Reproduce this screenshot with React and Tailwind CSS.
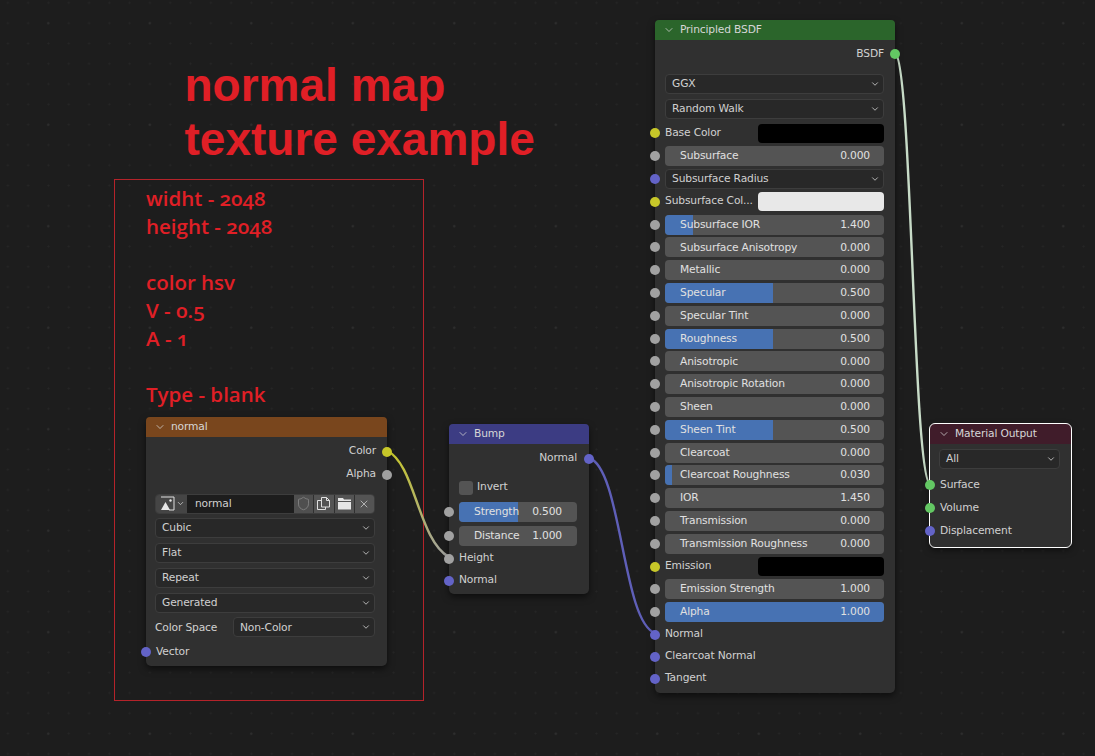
import { ChevronDown, Shield, X } from 'lucide-react'

const YELLOW = 'bg-[#c7c729]'
const GRAY = 'bg-[#a1a1a1]'
const PURPLE = 'bg-[#6363c7]'
const GREEN = 'bg-[#63c763]'

const Socket = ({ color, side = 'left' }) => (
  <span
    className={`absolute top-1/2 h-[10px] w-[10px] -translate-y-1/2 rounded-full ${color} ${
      side === 'left' ? 'left-[-5px]' : 'right-[-5px]'
    }`}
  />
)

const Header = ({ title, bg }) => (
  <div className={`flex h-5 items-center rounded-t-[4px] pl-[8px] text-[#d6d6d6] ${bg}`}>
    <ChevronDown className="mr-[5px] h-3 w-3" strokeWidth={1.5} />
    <span className="pt-px">{title}</span>
  </div>
)

const Dropdown = ({ label, className = '' }) => (
  <div className={`flex h-5 flex-1 items-center justify-between rounded-[4px] border border-[#3d3d3d] bg-[#282828] pl-[6px] pr-[3px] text-[#d0d0d0] ${className}`}>
    <span className="pt-px">{label}</span>
    <ChevronDown className="h-[10px] w-[10px]" strokeWidth={2} />
  </div>
)

// value slider with the blue fill taken from data
const Slider = ({ label, value, fill = 0, pr = 'pr-[14px]' }) => (
  <div className={`relative flex h-5 flex-1 items-center justify-between overflow-hidden rounded-[4px] bg-[#545454] pl-[15px] ${pr} text-[#e0e0e0]`}>
    <span className="absolute inset-y-0 left-0 bg-[#4772b3]" style={{ width: `${fill}%` }} />
    <span className="relative whitespace-nowrap pt-px">{label}</span>
    <span className="relative pt-px">{value}</span>
  </div>
)

const Row = ({ children, left, right, className = 'h-[22.8px]' }) => (
  <div className={`relative flex items-center ${className}`}>
    {left && <Socket color={left} />}
    {right && <Socket color={right} side="right" />}
    {children}
  </div>
)

const principledRows = [
  { type: 'color', label: 'Base Color', socket: YELLOW, swatch: 'bg-black' },
  { type: 'slider', label: 'Subsurface', value: '0.000', socket: GRAY },
  { type: 'select', label: 'Subsurface Radius', socket: PURPLE },
  { type: 'color', label: 'Subsurface Col...', socket: YELLOW, swatch: 'bg-[#e8e8e8]' },
  { type: 'slider', label: 'Subsurface IOR', value: '1.400', socket: GRAY, fill: 13 },
  { type: 'slider', label: 'Subsurface Anisotropy', value: '0.000', socket: GRAY },
  { type: 'slider', label: 'Metallic', value: '0.000', socket: GRAY },
  { type: 'slider', label: 'Specular', value: '0.500', socket: GRAY, fill: 49.5 },
  { type: 'slider', label: 'Specular Tint', value: '0.000', socket: GRAY },
  { type: 'slider', label: 'Roughness', value: '0.500', socket: GRAY, fill: 49.5 },
  { type: 'slider', label: 'Anisotropic', value: '0.000', socket: GRAY },
  { type: 'slider', label: 'Anisotropic Rotation', value: '0.000', socket: GRAY },
  { type: 'slider', label: 'Sheen', value: '0.000', socket: GRAY },
  { type: 'slider', label: 'Sheen Tint', value: '0.500', socket: GRAY, fill: 49.5 },
  { type: 'slider', label: 'Clearcoat', value: '0.000', socket: GRAY },
  { type: 'slider', label: 'Clearcoat Roughness', value: '0.030', socket: GRAY, fill: 3 },
  { type: 'slider', label: 'IOR', value: '1.450', socket: GRAY },
  { type: 'slider', label: 'Transmission', value: '0.000', socket: GRAY },
  { type: 'slider', label: 'Transmission Roughness', value: '0.000', socket: GRAY },
  { type: 'color', label: 'Emission', socket: YELLOW, swatch: 'bg-black' },
  { type: 'slider', label: 'Emission Strength', value: '1.000', socket: GRAY },
  { type: 'slider', label: 'Alpha', value: '1.000', socket: GRAY, fill: 100 },
  { type: 'plain', label: 'Normal', socket: PURPLE },
  { type: 'plain', label: 'Clearcoat Normal', socket: PURPLE },
  { type: 'plain', label: 'Tangent', socket: PURPLE },
]

const ImageIcon = () => (
  <svg width="15" height="15" viewBox="0 0 15 15" fill="none">
    <path d="M1 1h13v13H9" stroke="#e0e0e0" strokeWidth="1" />
    <path d="M1 14 L5.5 6 L10 14 Z" fill="#e6e6e6" />
    <circle cx="10.5" cy="4.5" r="1.2" fill="#e6e6e6" />
  </svg>
)

const DuplicateIcon = () => (
  <svg width="15" height="15" viewBox="0 0 15 15" fill="none" stroke="#e0e0e0" strokeWidth="1">
    <path d="M5.5 1.5h5l3 3v6.5h-8z" />
    <path d="M10.5 1.5v3h3" />
    <path d="M5.5 4.5h-4v9h8v-2.5" />
  </svg>
)

const FolderIcon = () => (
  <svg width="15" height="15" viewBox="0 0 15 15" fill="#e6e6e6">
    <path d="M1 2h5l1 1.5h7V5H1z" />
    <path d="M1 6h13v7.5H1z" />
  </svg>
)

const ImagePicker = () => (
  <div className="flex h-5 items-stretch overflow-hidden rounded-[4px] border border-[#3d3d3d] text-[#d0d0d0]">
    <div className="flex w-[31px] items-center bg-[#454545] pl-[4px]">
      <ImageIcon />
      <ChevronDown className="ml-[1px] h-[9px] w-[9px]" strokeWidth={2} />
    </div>
    <div className="flex w-[107px] items-center bg-[#1d1d1d] pl-2 pt-px">normal</div>
    <div className="flex flex-1 items-center justify-center bg-[#4f4f4f] text-[#999999]">
      <Shield className="h-[15px] w-[15px]" strokeWidth={1} />
    </div>
    <div className="ml-px flex flex-1 items-center justify-center bg-[#545454]">
      <DuplicateIcon />
    </div>
    <div className="ml-px flex flex-1 items-center justify-center bg-[#545454]">
      <FolderIcon />
    </div>
    <div className="ml-px flex flex-1 items-center justify-center bg-[#545454]">
      <X className="h-[12px] w-[12px]" strokeWidth={1.5} />
    </div>
  </div>
)

const nodeClass = 'absolute rounded-[5px] bg-[#303030] text-[10.7px] leading-none tracking-[-0.15px] shadow-[0_3px_7px_rgba(0,0,0,0.55)]'

const NormalNode = () => (
  <div className={`${nodeClass} left-[146px] top-[417px] h-[249px] w-[241px]`}>
    <Header title="normal" bg="bg-[#79461d]" />
    <div className="flex flex-col text-[#d0d0d0]">
      <Row right={YELLOW} className="mt-[3px] h-[23px] justify-end pr-[11px]">Color</Row>
      <Row right={GRAY} className="h-[23px] justify-end pr-[11px]">Alpha</Row>
      <div className="mt-[7.5px] flex flex-col gap-[4.8px] pl-[9px] pr-[12px]">
        <ImagePicker />
        <Dropdown label="Cubic" className="flex-none" />
        <Dropdown label="Flat" className="flex-none" />
        <Dropdown label="Repeat" className="flex-none" />
        <Dropdown label="Generated" className="flex-none" />
        <div className="flex items-center">
          <span className="w-[78px] pt-px">Color Space</span>
          <Dropdown label="Non-Color" />
        </div>
      </div>
      <Row left={PURPLE} className="mt-[3.5px] h-[23px] pl-[10px]">Vector</Row>
    </div>
  </div>
)

const BumpNode = () => (
  <div className={`${nodeClass} left-[449px] top-[424px] h-[170px] w-[140px]`}>
    <Header title="Bump" bg="bg-[#3c3c83]" />
    <div className="flex flex-col text-[#d0d0d0]">
      <Row right={PURPLE} className="mt-[3px] h-[23px] justify-end pr-[12px]">Normal</Row>
      <div className="mt-[6px] flex h-[23px] items-center pl-[10px]">
        <span className="mr-1 h-[14px] w-[14px] rounded-[3px] bg-[#545454]" />
        Invert
      </div>
      <Row left={GRAY} className="mt-[1px] h-[24px] pl-[10px] pr-[12px]">
        <Slider label="Strength" value="0.500" fill={50} pr="pr-[15px]" />
      </Row>
      <Row left={GRAY} className="h-[24px] pl-[10px] pr-[12px]">
        <Slider label="Distance" value="1.000" pr="pr-[15px]" />
      </Row>
      <Row left={GRAY} className="h-[21px] pl-[10px]">Height</Row>
      <Row left={PURPLE} className="h-[23px] pl-[10px]">Normal</Row>
    </div>
  </div>
)

const PrincipledNode = () => (
  <div className={`${nodeClass} left-[655px] top-[20px] h-[673px] w-[240px]`}>
    <Header title="Principled BSDF" bg="bg-[#2b652b]" />
    <div className="flex flex-col text-[#d0d0d0]">
      <Row right={GREEN} className="mt-[2.5px] h-[23px] justify-end pr-[11px]">BSDF</Row>
      <div className="mt-[8px] flex flex-col gap-[5px] pl-[10px] pr-[11px]">
        <Dropdown label="GGX" className="flex-none" />
        <Dropdown label="Random Walk" className="flex-none" />
      </div>
      <div className="mt-[3.5px] flex flex-col">
        {principledRows.map((row) => (
          <Row
            key={row.label}
            left={row.socket}
            className={`pl-[10px] pr-[11px] ${row.type === 'plain' ? 'h-[22px]' : 'h-[22.8px]'}`}
          >
            {row.type === 'slider' && <Slider label={row.label} value={row.value} fill={row.fill || 0} />}
            {row.type === 'select' && <Dropdown label={row.label} />}
            {row.type === 'plain' && <span>{row.label}</span>}
            {row.type === 'color' && (
              <>
                <span className="w-[93px] whitespace-nowrap">{row.label}</span>
                <span className={`h-[19px] flex-1 rounded-[4px] ${row.swatch}`} />
              </>
            )}
          </Row>
        ))}
      </div>
    </div>
  </div>
)

const OutputNode = () => (
  <div className={`${nodeClass} left-[930px] top-[424px] h-[123px] w-[141px] outline outline-1 outline-white`}>
    <Header title="Material Output" bg="bg-[#401c2a]" />
    <div className="flex flex-col text-[#d0d0d0]">
      <div className="mt-[5px] flex pl-[9px] pr-[11px]">
        <Dropdown label="All" className="flex-none w-full" />
      </div>
      <Row left={GREEN} className="mt-[4.5px] h-[23px] pl-[10px]">Surface</Row>
      <Row left={GREEN} className="h-[23px] pl-[10px]">Volume</Row>
      <Row left={PURPLE} className="h-[23px] pl-[10px]">Displacement</Row>
    </div>
  </div>
)

const Wires = () => (
  <svg className="absolute inset-0" width="1095" height="756" fill="none">
    <defs>
      <linearGradient id="colorToHeight" x1="387" y1="451" x2="449" y2="557" gradientUnits="userSpaceOnUse">
        <stop offset="0" stopColor="#c7c729" />
        <stop offset="1" stopColor="#a1a1a1" />
      </linearGradient>
    </defs>
    <path d="M387 451 C415 463 418 540 449 557" stroke="url(#colorToHeight)" strokeWidth="2.4" />
    <path d="M589 458 C622 468 622 622 655 633" stroke="#5f5fb8" strokeWidth="2.4" />
    <path d="M895 53 C912 60 913 478 930 484" stroke="#c8dcc8" strokeWidth="2.4" />
  </svg>
)

const App = () => {
  return (
    <div
      className="relative h-[756px] w-[1095px] overflow-hidden bg-[#1d1d1d] bg-[radial-gradient(circle,#2d2d2d_1.2px,transparent_1.6px),radial-gradient(circle,#262626_0.8px,transparent_1.2px)] bg-[size:101.5px_101.5px,20.3px_20.3px] bg-[position:99px_74px,18px_13px]"
      style={{ fontFamily: '"DejaVu Sans", sans-serif' }}
    >
      <div className="absolute left-[184.5px] top-[58px] font-['Liberation_Sans',sans-serif] text-[46px] font-bold leading-[54px] text-[#e01f26]">
        <div>normal map</div>
        <div>texture example</div>
      </div>
      <div className="absolute left-[114px] top-[179px] h-[522px] w-[310px] border border-[#b5232a] pl-[31px] pt-[4px] font-['Open_Sans',sans-serif] text-[20.5px] font-semibold leading-[28px] text-[#e01f26] oldstyle-nums">
        <div>widht - 2048</div>
        <div>height - 2048</div>
        <div className="mt-[28px]">color hsv</div>
        <div>V - 0.5</div>
        <div>A - 1</div>
        <div className="mt-[28px]">Type - blank</div>
      </div>
      <Wires />
      <NormalNode />
      <BumpNode />
      <PrincipledNode />
      <OutputNode />
    </div>
  )
}

export default App
